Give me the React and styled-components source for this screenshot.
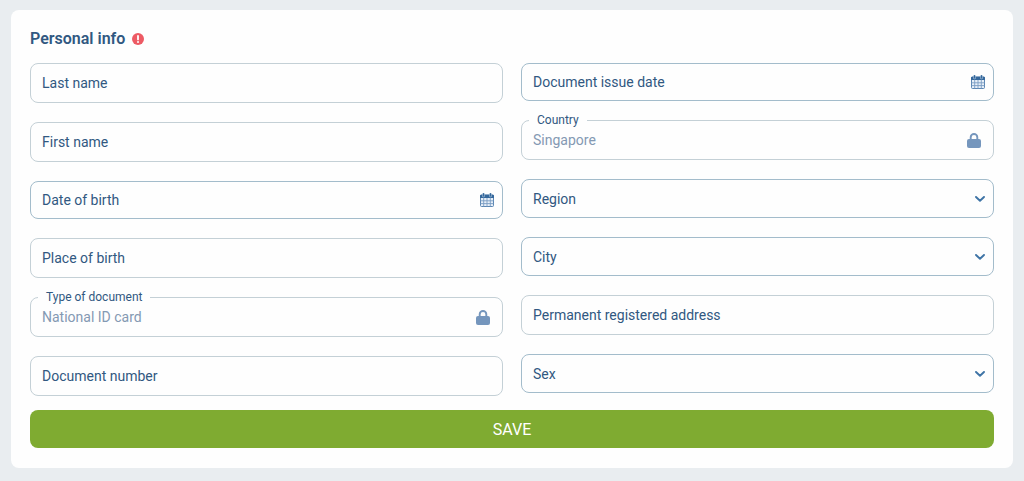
import React from "react";
import styled, { createGlobalStyle, css } from "styled-components";

const GlobalStyle = createGlobalStyle`
  *, *::before, *::after { box-sizing: border-box; }
  body {
    margin: 0;
    min-height: 100vh;
    background: #e9edf0;
    color: #315881;
    font-family: Roboto, "Liberation Sans", sans-serif;
    font-size: 14px;
  }
`;

const Page = styled.main`
  padding: 10px 11px 13px;
`;

const Card = styled.form`
  padding: 19px 19px 20px;
  border-radius: 8px;
  background: #fefefe;
`;

const Header = styled.header`
  display: flex;
  align-items: center;
  gap: 7px;
  height: 20px;
  margin-bottom: 14px;
`;

const Title = styled.h2`
  margin: 0;
  font-size: 16px;
  line-height: 20px;
  font-weight: 600;
`;

const Columns = styled.div`
  display: grid;
  grid-template-columns: 1fr 1fr;
  gap: 18px;
`;

const Column = styled.div`
  display: flex;
  flex-direction: column;
  gap: 19px;
`;

const Field = styled.div`
  position: relative;
  display: flex;
`;

const heights = { text: 40, date: 38, locked: 40, select: 39 };

const control = css`
  width: 100%;
  height: ${({ $kind }) => heights[$kind]}px;
  margin: 0;
  padding: 0 36px 0 11px;
  border: 1px solid ${({ $kind }) => ($kind === "date" || $kind === "select" ? "#a3bccb" : "#c4d0d6")};
  border-radius: 8px;
  background: transparent;
  color: #315881;
  font: inherit;
  outline-color: #315881;
`;

const Input = styled.input`
  ${control}
  &::placeholder { color: #315881; opacity: 1; }
  &:disabled { color: #8499b3; }
`;

const Select = styled.select`
  ${control}
  appearance: none;
`;

const FloatingLabel = styled.label`
  position: absolute;
  top: -7px;
  left: 8px;
  padding: 0 8px;
  background: #fefefe;
  font-size: 12px;
  line-height: 14px;
`;

const Adornment = styled.span`
  position: absolute;
  top: 0;
  bottom: 0;
  right: ${({ $right }) => $right}px;
  display: flex;
  align-items: center;
  pointer-events: none;
`;

const SaveButton = styled.button`
  display: block;
  width: 100%;
  height: 38px;
  margin-top: 14px;
  padding: 0;
  border: 0;
  border-radius: 8px;
  background: #7fab31;
  color: #fff;
  font: inherit;
  font-size: 16px;
  cursor: pointer;
`;

function AlertIcon() {
  return (
    <svg width="12" height="12" viewBox="0 0 12 12" role="img" aria-label="Incomplete">
      <circle cx="6" cy="6" r="6" fill="#ed5a64" />
      <path d="M6 3v3.4" stroke="#fff" strokeWidth="1.8" strokeLinecap="round" />
      <circle cx="6" cy="8.9" r="1" fill="#fff" />
    </svg>
  );
}

function CalendarIcon() {
  return (
    <svg width="14" height="14" viewBox="0 0 14 14" aria-hidden="true">
      <rect x="0.5" y="2" width="13" height="11.5" rx="1" fill="#e7eff8" stroke="#5c86b3" />
      <path d="M1 1.8h12a1 1 0 0 1 1 1V5H0V2.800a1 1 0 0 1 1-1z" fill="#35689c" />
      <path d="M3.700 5v8.500M7 5v8.500M10.300 5v8.500M0.500 7.800h13M0.500 10.600h13" stroke="#7a9dc3" strokeWidth="0.9" />
      <path d="M3.500 1.200v1.800M10.500 1.200v1.800" stroke="#b9cde2" strokeWidth="2.400" strokeLinecap="round" />
      <path d="M3.500 0.800v2.200M10.500 0.800v2.200" stroke="#35689c" strokeWidth="1.500" strokeLinecap="round" />
    </svg>
  );
}

function LockIcon() {
  return (
    <svg width="14" height="15" viewBox="0 0 14 15" aria-hidden="true">
      <path d="M3.700 7V4.300a3.300 3.300 0 0 1 6.600 0V7" fill="none" stroke="#7596bd" strokeWidth="1.900" />
      <rect x="0" y="6" width="14" height="9" rx="2" fill="#7596bd" />
    </svg>
  );
}

function ChevronIcon() {
  return (
    <svg width="10" height="6" viewBox="0 0 10 6" aria-hidden="true">
      <path d="M1 1l4 3.800 4-3.800" fill="none" stroke="#3f74a6" strokeWidth="1.900" strokeLinecap="round" strokeLinejoin="round" />
    </svg>
  );
}

function TextField({ label }) {
  return (
    <Field>
      <Input $kind="text" type="text" placeholder={label} aria-label={label} />
    </Field>
  );
}

function DateField({ label }) {
  return (
    <Field>
      <Input $kind="date" type="text" placeholder={label} aria-label={label} />
      <Adornment $right={9}><CalendarIcon /></Adornment>
    </Field>
  );
}

function LockedField({ id, label, value }) {
  return (
    <Field>
      <Input $kind="locked" id={id} type="text" defaultValue={value} disabled />
      <FloatingLabel htmlFor={id}>{label}</FloatingLabel>
      <Adornment $right={13}><LockIcon /></Adornment>
    </Field>
  );
}

function SelectField({ label }) {
  return (
    <Field>
      <Select $kind="select" aria-label={label} defaultValue="">
        <option value="">{label}</option>
      </Select>
      <Adornment $right={9}><ChevronIcon /></Adornment>
    </Field>
  );
}

export default function App() {
  return (
    <>
      <GlobalStyle />
      <Page>
        <Card onSubmit={(event) => event.preventDefault()}>
          <Header>
            <Title>Personal info</Title>
            <AlertIcon />
          </Header>
          <Columns>
            <Column>
              <TextField label="Last name" />
              <TextField label="First name" />
              <DateField label="Date of birth" />
              <TextField label="Place of birth" />
              <LockedField id="document-type" label="Type of document" value="National ID card" />
              <TextField label="Document number" />
            </Column>
            <Column>
              <DateField label="Document issue date" />
              <LockedField id="country" label="Country" value="Singapore" />
              <SelectField label="Region" />
              <SelectField label="City" />
              <TextField label="Permanent registered address" />
              <SelectField label="Sex" />
            </Column>
          </Columns>
          <SaveButton type="submit">SAVE</SaveButton>
        </Card>
      </Page>
    </>
  );
}
